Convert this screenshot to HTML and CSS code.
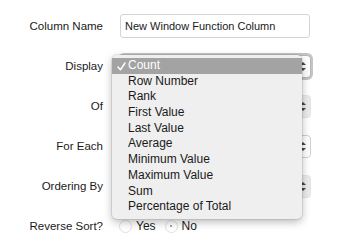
FILE: index.html
```html
<!DOCTYPE html>
<html>
<head>
<meta charset="utf-8">
<link rel="stylesheet" href="styles.css">
</head>
<body>
<div class="page">
  <form class="form">
    <label class="label">Column Name</label>
    <div class="input">New Window Function Column</div>

    <label class="label">Display</label>
    <div class="select focused"><span class="arrows"></span></div>

    <label class="label">Of</label>
    <div class="select grey"><span class="arrows"></span></div>

    <label class="label">For Each</label>
    <div class="select"><span class="arrows"></span></div>

    <label class="label">Ordering By</label>
    <div class="select grey"><span class="arrows"></span></div>

    <label class="label">Reverse Sort?</label>
    <div class="radios">
      <span class="radio"></span><span class="radio-text">Yes</span>
      <span class="radio checked"></span><span class="radio-text">No</span>
    </div>
  </form>

  <ul class="menu">
    <li class="item selected"><svg class="check" width="9" height="9" viewBox="0 0 9 9"><path d="M1 5 L3.4 7.8 L8 1" fill="none" stroke="#fff" stroke-width="1.5" stroke-linecap="round" stroke-linejoin="round"/></svg>Count</li>
    <li class="item">Row Number</li>
    <li class="item">Rank</li>
    <li class="item">First Value</li>
    <li class="item">Last Value</li>
    <li class="item">Average</li>
    <li class="item">Minimum Value</li>
    <li class="item">Maximum Value</li>
    <li class="item">Sum</li>
    <li class="item">Percentage of Total</li>
  </ul>
</div>
</body>
</html>
```

FILE: styles.css
```css
html, body {
  margin: 0;
  padding: 0;
  background: #ffffff;
}
body {
  font-family: "Liberation Sans", Arial, sans-serif;
  color: #1a1a1a;
  width: 346px;
  height: 247px;
  overflow: hidden;
}
.page {
  position: relative;
  width: 346px;
  height: 247px;
}
.form {
  display: grid;
  grid-template-columns: 103px 191px;
  grid-auto-rows: 24px;
  column-gap: 17px;
  row-gap: 16px;
  align-items: center;
  padding-top: 14px;
  margin: 0;
}
.label {
  text-align: right;
  font-size: 11.5px;
  color: #1a1a1a;
  white-space: nowrap;
}
.input {
  box-sizing: border-box;
  height: 24px;
  width: 190px;
  border: 1px solid #d4d4d4;
  border-radius: 3px;
  padding: 0 0 0 4px;
  font-size: 11px;
  line-height: 22px;
  color: #1a1a1a;
  white-space: nowrap;
  overflow: hidden;
}
.select {
  box-sizing: border-box;
  position: relative;
  height: 23px;
  width: 191px;
  border: 1px solid #d0d0d0;
  border-radius: 4px;
  background: #fff;
}
.select.grey {
  background: #ececec;
  border-color: #e4e4e4;
}
.select.focused {
  border-color: #b8b8b8;
  box-shadow: 0 0 0 2px #c4c4c4;
}
.arrows {
  position: absolute;
  right: 4px;
  top: 50%;
  width: 6px;
  height: 9px;
  margin-top: -4.5px;
}
.arrows::before,
.arrows::after {
  content: "";
  position: absolute;
  left: 0;
  border-left: 3px solid transparent;
  border-right: 3px solid transparent;
}
.arrows::before {
  top: 0;
  border-bottom: 3.5px solid #444;
}
.arrows::after {
  bottom: 0;
  border-top: 3.5px solid #444;
}
.radios {
  display: flex;
  align-items: center;
  font-size: 12px;
  color: #1a1a1a;
}
.radio {
  box-sizing: border-box;
  width: 13px;
  height: 13px;
  border: 1px solid #e0e0e0;
  border-radius: 50%;
  background: #fff;
  margin-left: -1px;
  position: relative;
}
.radio.checked {
  margin-left: 9px;
}
.radio.checked::after {
  content: "";
  position: absolute;
  left: 4.5px;
  top: 4.5px;
  width: 2px;
  height: 2px;
  border-radius: 50%;
  background: #888;
}
.radio-text {
  margin-left: 4px;
}
.menu {
  position: absolute;
  left: 112px;
  top: 55px;
  width: 190px;
  margin: 0;
  padding: 3px 0 4px;
  list-style: none;
  background: #efefef;
  border-radius: 5px;
  box-shadow: 0 0 0 1px rgba(0,0,0,0.08), 0 3px 8px rgba(0,0,0,0.28);
  font-size: 12px;
}
.item {
  position: relative;
  height: 15.7px;
  line-height: 15.7px;
  padding-left: 16px;
  color: #1a1a1a;
  white-space: nowrap;
}
.item.selected {
  background: #a3a3a3;
  color: #fff;
}
.check {
  position: absolute;
  left: 5px;
  top: 3.5px;
}
```
